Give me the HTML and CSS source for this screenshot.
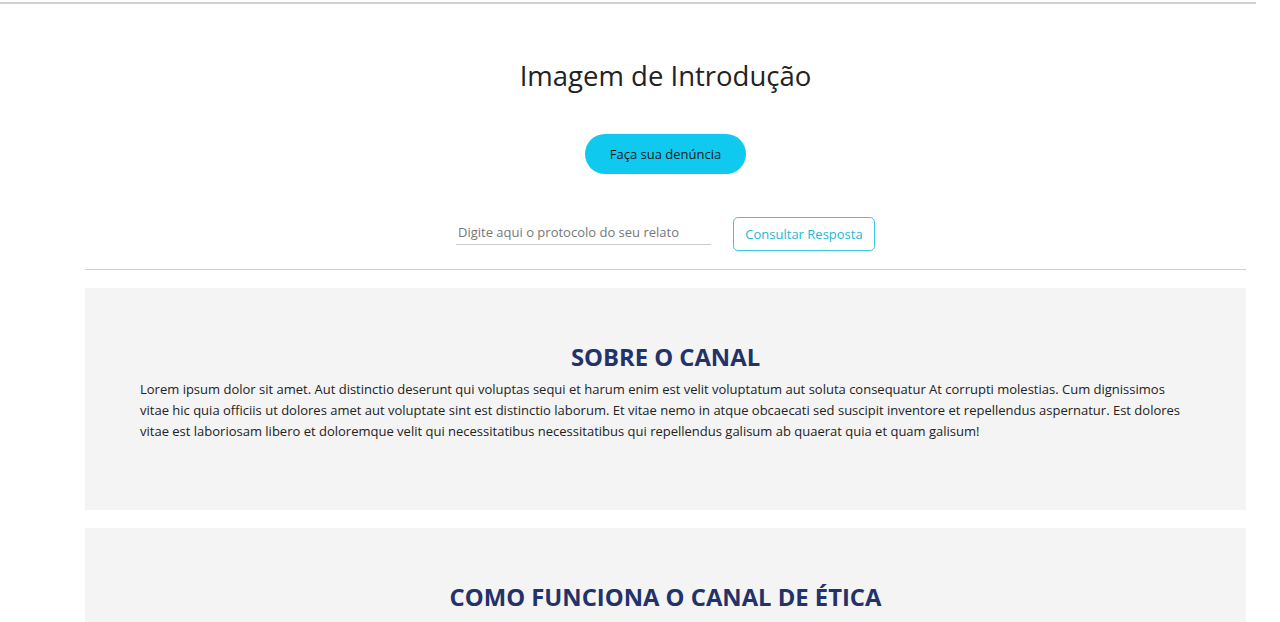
FILE: index.html
```html
<!DOCTYPE html>
<html lang="pt-BR">
<head>
<meta charset="utf-8">
<title>Canal de Ética</title>
<link rel="stylesheet" href="styles.css">
</head>
<body>
<div class="topline"></div>
<main class="container">
  <header class="intro">
    <h1 class="intro-title">Imagem de Introdução</h1>
    <button class="btn-report" type="button">Faça sua denúncia</button>
    <form class="protocol">
      <input class="protocol-input" type="text" placeholder="Digite aqui o protocolo do seu relato">
      <button class="btn-consult" type="button">Consultar Resposta</button>
    </form>
  </header>
  <hr class="divider">
  <section class="panel">
    <h2 class="panel-title">SOBRE O CANAL</h2>
    <p class="panel-text">Lorem ipsum dolor sit amet. Aut distinctio deserunt qui voluptas sequi et harum enim est velit voluptatum aut soluta consequatur At corrupti molestias. Cum dignissimos vitae hic quia officiis ut dolores amet aut voluptate sint est distinctio laborum. Et vitae nemo in atque obcaecati sed suscipit inventore et repellendus aspernatur. Est dolores vitae est laboriosam libero et doloremque velit qui necessitatibus necessitatibus qui repellendus galisum ab quaerat quia et quam galisum!</p>
  </section>
  <section class="panel">
    <h2 class="panel-title">COMO FUNCIONA O CANAL DE ÉTICA</h2>
  </section>
</main>
</body>
</html>
```
FILE: styles.css
```css
* { box-sizing: border-box; }
html, body { margin: 0; padding: 0; background: #fff; }
body {
  font-family: "Open Sans", "Noto Sans", sans-serif;
  color: #222;
  overflow: hidden;
  height: 622px;
}
.topline {
  width: 1256px;
  height: 2px;
  margin-top: 2px;
  background: #d0d0d0;
}
.container {
  width: 1161px;
  margin-left: 85px;
}
.intro {
  display: flex;
  flex-direction: column;
  align-items: center;
}
.intro-title {
  margin: 52px 0 0;
  font-size: 27.5px;
  font-weight: 400;
  line-height: 40px;
  color: #222;
}
.btn-report {
  margin-top: 38px;
  width: 161px;
  height: 40px;
  border: none;
  border-radius: 20px;
  background: #0fc9ee;
  color: #1a1a1a;
  font-family: inherit;
  font-size: 13px;
}
.protocol {
  display: flex;
  align-items: center;
  gap: 22px;
  margin-top: 43px;
}
.protocol-input {
  width: 255px;
  height: 22px;
  margin-top: -1px;
  border: none;
  border-bottom: 1px solid #ccc;
  padding: 0 2px 3px;
  font-family: inherit;
  font-size: 13px;
  background: transparent;
  outline: none;
}
.protocol-input::placeholder { color: #777; }
.btn-consult {
  width: 142px;
  height: 34px;
  background: #fff;
  border: 1px solid #3ec6d9;
  border-radius: 5px;
  color: #22b8d4;
  font-family: inherit;
  font-size: 13px;
}
.divider {
  margin: 18px 0 0;
  border: none;
  border-top: 1px solid #cfcfcf;
  height: 0;
}
.panel {
  background: #f4f4f4;
  margin-top: 18px;
  padding: 52px 55px 0;
  min-height: 222px;
}
.panel-title {
  margin: 0 0 5px;
  text-align: center;
  font-size: 23.8px;
  font-weight: 700;
  color: #233268;
  line-height: 34px;
}
.panel-text {
  margin: 0;
  font-size: 13px;
  line-height: 21px;
  color: #222;
}
```
